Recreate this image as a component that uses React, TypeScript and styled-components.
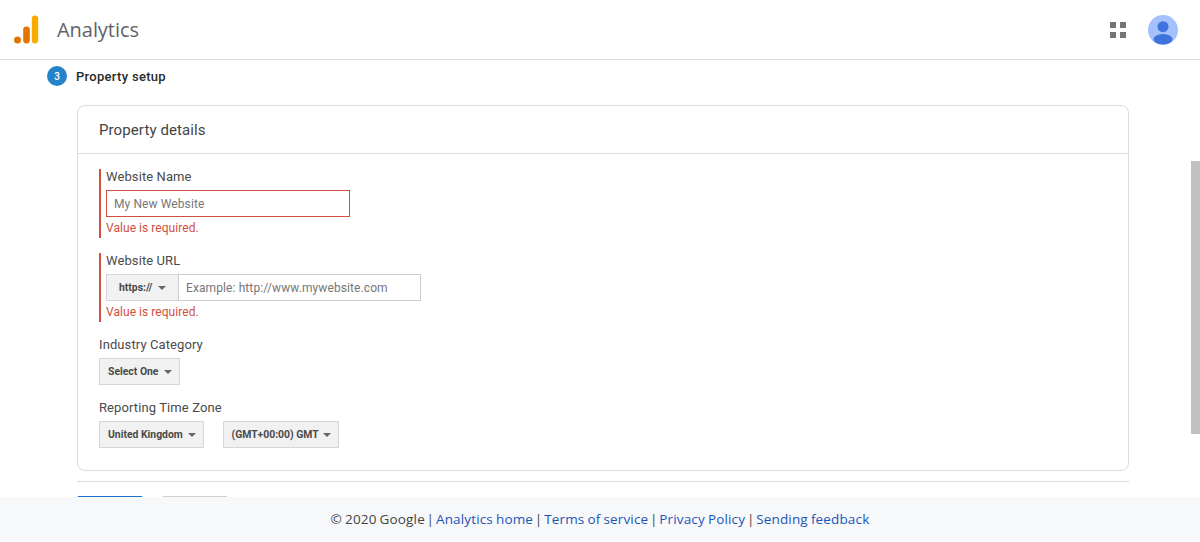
import React from "react";
import styled, { createGlobalStyle } from "styled-components";

const Global = createGlobalStyle`
  html, body { margin: 0; padding: 0; background: #fff; }
  body { font-family: Roboto, "Liberation Sans", sans-serif; color: #3c4043; }
  * { box-sizing: border-box; }
`;
const Page = styled.div`
  position: relative; width: 1200px; height: 542px; overflow: hidden;
  display: flex; flex-direction: column;
`;
const Header = styled.header`
  height: 60px; flex: none; border-bottom: 1px solid #d9d9d9; background: #fff;
  display: flex; align-items: center; padding: 0 22px 0 13px;
`;
const Logo = styled.svg`width: 26px; height: 30px; margin-top: -1px; flex: none;`;
const Title = styled.div`
  margin-left: 18px; font-family: "Open Sans", Roboto, sans-serif; font-size: 20px; color: #5f6368;
  letter-spacing: -0.05px;
`;
const HeaderRight = styled.div`margin-left: auto; display: flex; align-items: center; gap: 22px;`;
const Grid = styled.div`
  display: grid; grid-template-columns: 6px 6px; grid-auto-rows: 6px; gap: 4px;
`;
const Dot = styled.span`background: #757575; display: block;`;
const Avatar = styled.svg`width: 30px; height: 30px; display: block;`;
const Main = styled.main`flex: 1; min-height: 0; overflow: hidden; padding: 6px 71px 0 47px;`;
const StepRow = styled.div`display: flex; align-items: center; height: 20px; gap: 9px;`;
const StepBadge = styled.div`
  width: 20px; height: 20px; border-radius: 50%; background: #2583cb; color: #fff;
  font-size: 10px; font-weight: 500; display: flex; align-items: center; justify-content: center;
`;
const StepLabel = styled.div`font-size: 13px; font-weight: 500; color: #2a2a2a; letter-spacing: 0.3px;`;
const Body = styled.div`margin: 19px 0 0 30px; width: 1052px;`;
const Card = styled.section`
  height: 366px; border: 1px solid #dadce0; border-radius: 8px; background: #fff;
`;
const CardHead = styled.div`
  height: 48px; border-bottom: 1px solid #dadce0; padding: 0 21px;
  display: flex; align-items: center; font-size: 15px; color: #444; letter-spacing: 0.1px;
`;
const CardBody = styled.div`padding: 15px 21px 0; display: flex; flex-direction: column;`;
const Field = styled.div<{ $error?: boolean; $gap?: number }>`
  ${p => p.$error ? "border-left: 2px solid #cf4f40; padding-left: 5px; height: 69px;" : ""}
  margin-bottom: ${p => p.$gap ?? 0}px;
`;
const Label = styled.div`
  font-size: 13px; line-height: 16px; color: #4a4a4a; letter-spacing: 0.1px; margin-bottom: 5px;
`;
const TextInput = styled.div<{ $error?: boolean; $w?: number }>`
  width: ${p => p.$w ?? 244}px; height: 27px; background: #fff;
  border: ${p => p.$error ? "1.5px solid #cf4f40" : "1px solid #ccc"};
  display: flex; align-items: center; padding: 0 7px;
  font-size: 12px; color: #777; letter-spacing: 0.1px;
`;
const UrlRow = styled.div`display: flex;`;
const Err = styled.div`font-size: 12px; line-height: 16px; color: #cf4f40; margin-top: 3px; letter-spacing: 0.05px;`;
const Select = styled.div<{ $w: number; $joined?: boolean }>`
  width: ${p => p.$w}px; height: 27px; background: #f1f1f1;
  border: 1px solid #d6d6d6; ${p => p.$joined ? "border-right: 0;" : ""}
  display: flex; align-items: center; justify-content: space-between;
  padding: 0 ${p => p.$joined ? "12px" : "7px"} 0 ${p => p.$joined ? "12px" : "8px"};
  font-size: 10.4px; font-weight: 700; color: #4a4a4a; white-space: nowrap;
`;
const Caret = styled.span`
  width: 0; height: 0; border-left: 4.5px solid transparent; border-right: 4.5px solid transparent;
  border-top: 4px solid #666; flex: none;
`;
const SelectRow = styled.div`display: flex; gap: 18.5px;`;
const Divider = styled.div`height: 1px; background: #dadce0; margin-top: 10px;`;
const Buttons = styled.div`display: flex; gap: 19px; margin-top: 14px;`;
const Btn = styled.div<{ $primary?: boolean }>`
  width: 66px; height: 30px; border-radius: 2px;
  background: #fff; border-top: 1px solid ${p => p.$primary ? "#1a73c8" : "#d0d0d0"};
`;
const Footer = styled.footer`
  position: absolute; left: 0; right: 0; bottom: 0; height: 45px; background: #f7f8fa;
  display: flex; align-items: center; justify-content: center; padding-bottom: 1px;
  font-family: "Open Sans", Roboto, sans-serif; font-size: 13.5px; letter-spacing: 0.15px;
  word-spacing: -0.6px; color: #444;
`;
const FooterLine = styled.div`white-space: pre;`;
const Sep = styled.span`word-spacing: -1.9px;`;
const FooterLink = styled.a`color: #1a56b8; text-decoration: none;`;
const ScrollThumb = styled.div`
  position: absolute; right: 0; top: 161px; width: 9px; height: 273px; background: #c1c1c1;
`;

export default function App() {
  return (
    <Page>
      <Global />
      <Header>
        <Logo viewBox="0 0 26 30">
          <rect x="18.8" y="1.5" width="6.4" height="28" rx="3.2" fill="#f9ab00" />
          <rect x="10.2" y="12.5" width="6.6" height="17" rx="3.3" fill="#e37400" />
          <circle cx="4.5" cy="26" r="3.5" fill="#e37400" />
        </Logo>
        <Title>Analytics</Title>
        <HeaderRight>
          <Grid>{[0, 1, 2, 3].map(i => <Dot key={i} />)}</Grid>
          <Avatar viewBox="0 0 30 30">
            <defs><clipPath id="av"><circle cx="15" cy="15" r="15" /></clipPath></defs>
            <circle cx="15" cy="15" r="15" fill="#a4c1fb" />
            <g clipPath="url(#av)" fill="#3f72dc">
              <circle cx="15" cy="11.7" r="5.5" />
              <ellipse cx="15" cy="24.3" rx="9.5" ry="5.2" />
            </g>
          </Avatar>
        </HeaderRight>
      </Header>
      <Main>
        <StepRow>
          <StepBadge>3</StepBadge>
          <StepLabel>Property setup</StepLabel>
        </StepRow>
        <Body>
          <Card>
            <CardHead>Property details</CardHead>
            <CardBody>
              <Field $error $gap={15}>
                <Label>Website Name</Label>
                <TextInput $error>My New Website</TextInput>
                <Err>Value is required.</Err>
              </Field>
              <Field $error $gap={15}>
                <Label>Website URL</Label>
                <UrlRow>
                  <Select $w={72} $joined><span>https://</span><Caret /></Select>
                  <TextInput $w={243}>Example: http://www.mywebsite.com</TextInput>
                </UrlRow>
                <Err>Value is required.</Err>
              </Field>
              <Field $gap={15}>
                <Label>Industry Category</Label>
                <SelectRow><Select $w={81}><span>Select One</span><Caret /></Select></SelectRow>
              </Field>
              <Field>
                <Label>Reporting Time Zone</Label>
                <SelectRow>
                  <Select $w={105}><span>United Kingdom</span><Caret /></Select>
                  <Select $w={116.5}><span>(GMT+00:00) GMT</span><Caret /></Select>
                </SelectRow>
              </Field>
            </CardBody>
          </Card>
          <Divider />
          <Buttons><Btn $primary /><Btn /></Buttons>
        </Body>
      </Main>
      <ScrollThumb />
      <Footer>
        <FooterLine>
          © 2020 Google<Sep> | </Sep><FooterLink>Analytics home</FooterLink><Sep> | </Sep><FooterLink>Terms of service</FooterLink><Sep> | </Sep><FooterLink>Privacy Policy</FooterLink><Sep> | </Sep><FooterLink>Sending feedback</FooterLink>
        </FooterLine>
      </Footer>
    </Page>
  );
}
